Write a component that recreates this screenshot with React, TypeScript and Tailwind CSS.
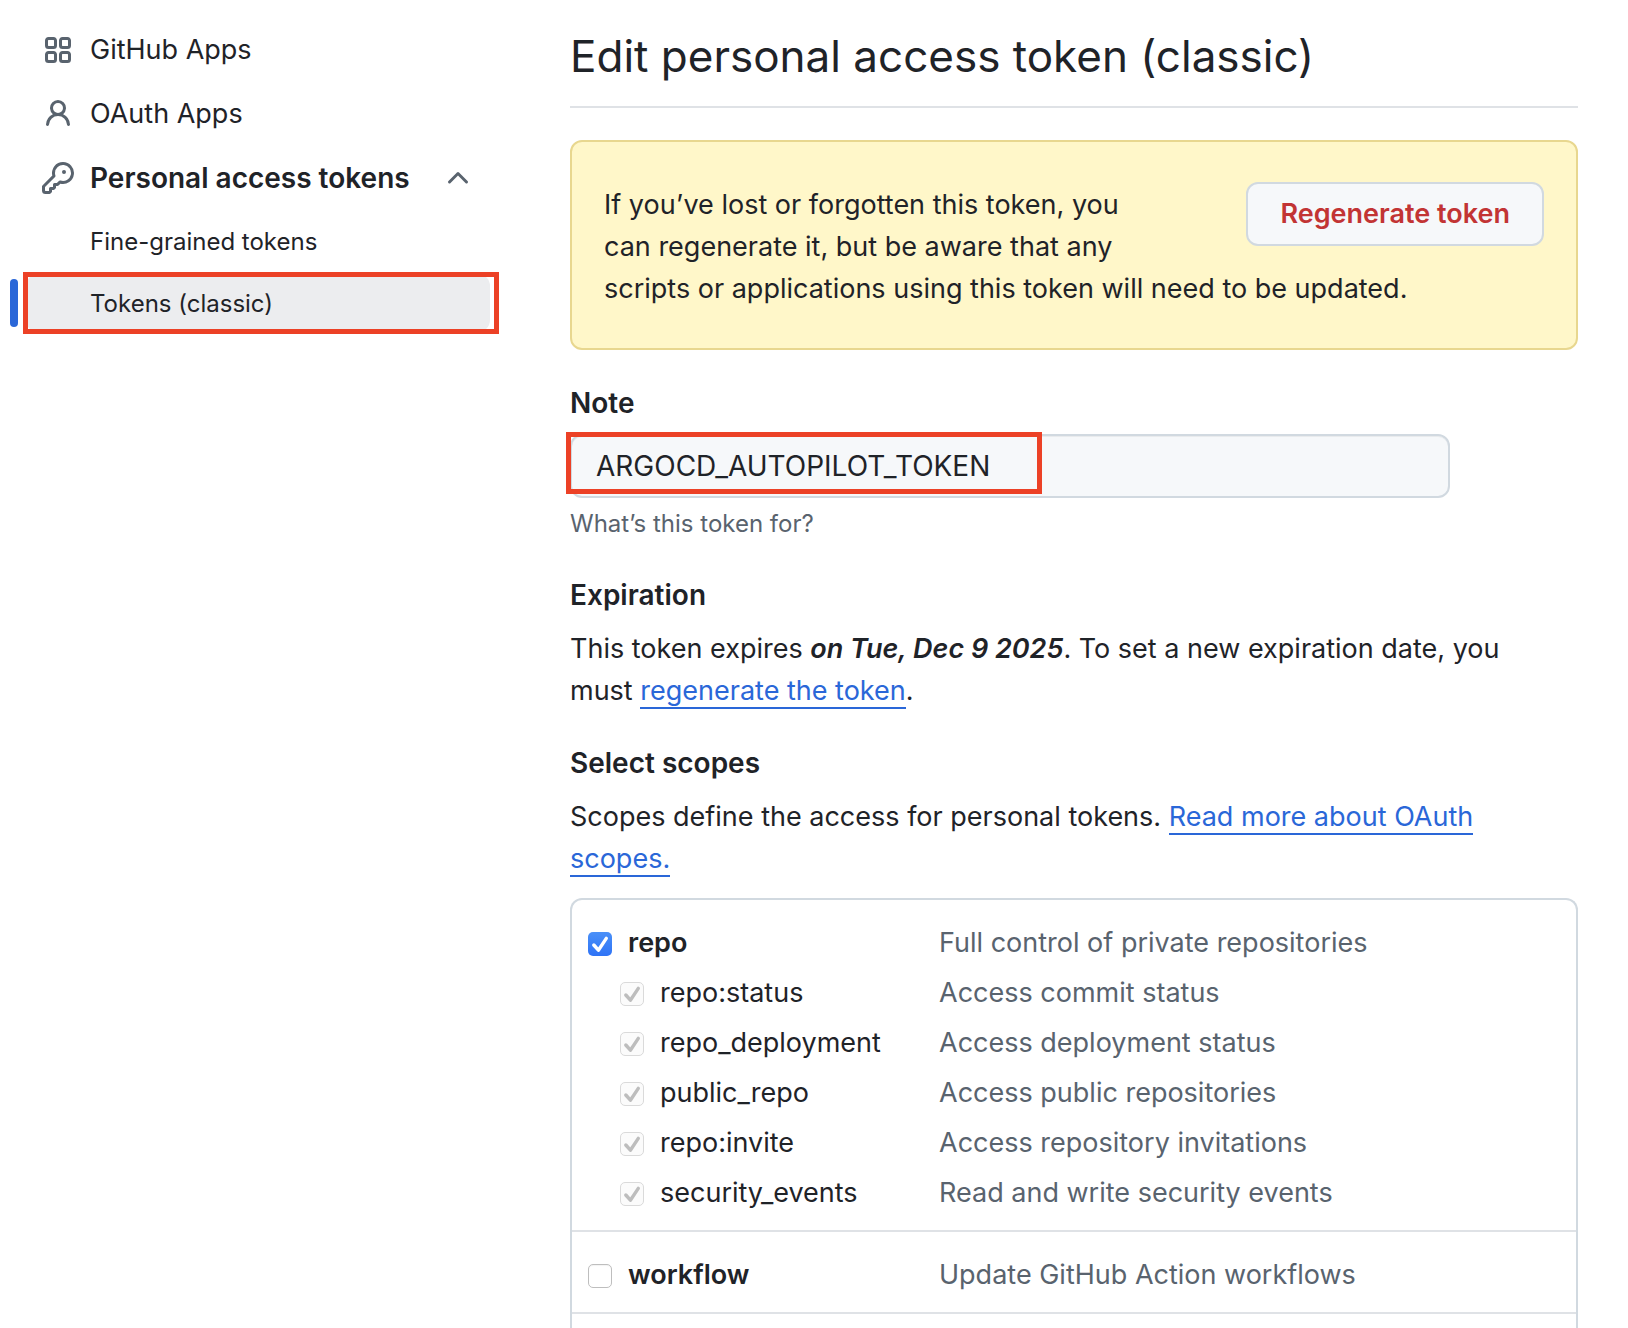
import React, { useState } from 'react';

interface Scope {
  name: string;
  description: string;
  children?: Scope[];
}

const scopes: Scope[] = [
  {
    name: 'repo',
    description: 'Full control of private repositories',
    children: [
      { name: 'repo:status', description: 'Access commit status' },
      { name: 'repo_deployment', description: 'Access deployment status' },
      { name: 'public_repo', description: 'Access public repositories' },
      { name: 'repo:invite', description: 'Access repository invitations' },
      { name: 'security_events', description: 'Read and write security events' },
    ],
  },
  { name: 'workflow', description: 'Update GitHub Action workflows' },
];

const icons = {
  apps: 'M1.5 3.25c0-.966.784-1.75 1.75-1.75h2.5c.966 0 1.75.784 1.75 1.75v2.5A1.75 1.75 0 0 1 5.75 7.5h-2.5A1.75 1.75 0 0 1 1.5 5.75Zm7 0c0-.966.784-1.75 1.75-1.75h2.5c.966 0 1.75.784 1.75 1.75v2.5a1.75 1.75 0 0 1-1.75 1.75h-2.5A1.75 1.75 0 0 1 8.5 5.75Zm-7 7c0-.966.784-1.75 1.75-1.75h2.5c.966 0 1.75.784 1.75 1.75v2.5a1.75 1.75 0 0 1-1.75 1.75h-2.5a1.75 1.75 0 0 1-1.75-1.75Zm7 0c0-.966.784-1.75 1.75-1.75h2.5c.966 0 1.75.784 1.75 1.75v2.5a1.75 1.75 0 0 1-1.75 1.75h-2.5a1.75 1.75 0 0 1-1.75-1.75ZM3.25 3a.25.25 0 0 0-.25.25v2.5c0 .138.112.25.25.25h2.5A.25.25 0 0 0 6 5.75v-2.5A.25.25 0 0 0 5.75 3Zm7 0a.25.25 0 0 0-.25.25v2.5c0 .138.112.25.25.25h2.5a.25.25 0 0 0 .25-.25v-2.5a.25.25 0 0 0-.25-.25Zm-7 7a.25.25 0 0 0-.25.25v2.5c0 .138.112.25.25.25h2.5a.25.25 0 0 0 .25-.25v-2.5a.25.25 0 0 0-.25-.25Zm7 0a.25.25 0 0 0-.25.25v2.5c0 .138.112.25.25.25h2.5a.25.25 0 0 0 .25-.25v-2.5a.25.25 0 0 0-.25-.25Z',
  person:
    'M10.561 8.073a6.005 6.005 0 0 1 3.432 5.142.75.75 0 1 1-1.498.07 4.5 4.5 0 0 0-8.99 0 .75.75 0 0 1-1.498-.07 6.004 6.004 0 0 1 3.431-5.142 3.999 3.999 0 1 1 5.123 0ZM10.5 5a2.5 2.5 0 1 0-5 0 2.5 2.5 0 0 0 5 0Z',
  key: 'M10.5 0a5.499 5.499 0 1 1-1.288 10.848l-.932.932a.749.749 0 0 1-.53.22H7v.75a.749.749 0 0 1-.22.53l-.5.5a.749.749 0 0 1-.53.22H5v.75a.749.749 0 0 1-.22.53l-.5.5a.749.749 0 0 1-.53.22h-2A1.75 1.75 0 0 1 0 14.25v-2c0-.199.079-.389.22-.53l4.932-4.932A5.5 5.5 0 0 1 10.5 0Zm-4 5.5c-.001.431.069.86.205 1.269a.75.75 0 0 1-.181.768L1.5 12.56v1.69c0 .138.112.25.25.25h1.69l.06-.06v-1.19a.75.75 0 0 1 .75-.75h1.19l.06-.06v-1.19a.75.75 0 0 1 .75-.75h1.19l1.023-1.025a.75.75 0 0 1 .768-.18A4 4 0 1 0 6.5 5.5ZM11 6a1 1 0 1 1 0-2 1 1 0 0 1 0 2Z',
  chevronUp:
    'M3.22 10.53a.749.749 0 0 1 0-1.06l4.25-4.25a.749.749 0 0 1 1.06 0l4.25 4.25a.749.749 0 1 1-1.06 1.06L8 6.811 4.28 10.53a.749.749 0 0 1-1.06 0Z',
};

const Icon: React.FC<{ path: string }> = ({ path }) => (
  <svg viewBox="0 0 16 16" fill="currentColor" aria-hidden="true" className="h-8 w-8 shrink-0 text-[#59636e]">
    <path d={path} />
  </svg>
);

interface CheckboxProps {
  id: string;
  checked: boolean;
  disabled?: boolean;
  onChange: () => void;
}

const Checkbox: React.FC<CheckboxProps> = ({ id, checked, disabled, onChange }) => (
  <span className="relative mt-px h-6 w-6 shrink-0">
    <input
      id={id}
      type="checkbox"
      checked={checked}
      disabled={disabled}
      onChange={onChange}
      className="block h-6 w-6 appearance-none rounded-[5px] border border-[#bebebe] bg-white inset-shadow-xs checked:border-0 checked:bg-linear-to-b checked:from-[#4a90f8] checked:to-[#2f73f6] checked:inset-shadow-none disabled:border disabled:border-[#dadada] disabled:bg-none disabled:bg-[#fbfbfb]"
    />
    {checked && (
      <svg
        viewBox="0 0 24 24"
        fill="none"
        stroke="currentColor"
        strokeWidth="3.4"
        strokeLinecap="round"
        strokeLinejoin="round"
        aria-hidden="true"
        className={`pointer-events-none absolute inset-0 ${disabled ? 'text-[#bdbdbd]' : 'text-white'}`}
      >
        <path d="M5.8 13l4.6 5.2L18.3 6.4" />
      </svg>
    )}
  </span>
);

interface ScopeRowProps {
  scope: Scope;
  nested?: boolean;
  checked: boolean;
  onChange: () => void;
}

const ScopeRow: React.FC<ScopeRowProps> = ({ scope, nested, checked, onChange }) => (
  <div className="flex h-[50px] items-center">
    <div className={`flex w-[351px] shrink-0 items-center gap-4 ${nested ? 'pl-8' : ''}`}>
      <Checkbox id={scope.name} checked={checked} disabled={nested} onChange={onChange} />
      <label htmlFor={scope.name} className={nested ? '' : 'font-semibold'}>
        {scope.name}
      </label>
    </div>
    <span className="text-[#59636e]">{scope.description}</span>
  </div>
);

const App: React.FC = () => {
  const [note, setNote] = useState('ARGOCD_AUTOPILOT_TOKEN');
  const [selected, setSelected] = useState<string[]>(['repo']);

  const toggle = (name: string) => {
    setSelected((prev) => (prev.includes(name) ? prev.filter((n) => n !== name) : [...prev, name]));
  };

  const linkClass = 'border-b-2 border-[#2a67d8] text-[#2a67d8]';
  const headingClass = 'text-[28px] leading-[42px] font-semibold';

  return (
    <div className="flex min-h-screen bg-white font-[Inter,sans-serif] text-[27px] leading-[42px] text-[#1f2328]">
      <nav aria-label="Developer settings" className="w-[499px] shrink-0 pt-[18px] pl-[10px]">
        <ul>
          <li>
            <a href="#github-apps" className="flex h-16 items-center gap-4 pl-8">
              <Icon path={icons.apps} />
              GitHub Apps
            </a>
          </li>
          <li>
            <a href="#oauth-apps" className="flex h-16 items-center gap-4 pl-8">
              <Icon path={icons.person} />
              OAuth Apps
            </a>
          </li>
          <li>
            <button
              type="button"
              aria-expanded="true"
              className="flex h-16 w-full items-center gap-4 pr-[25px] pl-8 text-[28px] font-semibold"
            >
              <Icon path={icons.key} />
              <span className="flex-1 text-left">Personal access tokens</span>
              <Icon path={icons.chevronUp} />
            </button>
            <ul className="text-2xl">
              <li>
                <a href="#fine-grained" className="flex h-[62px] items-center pt-[2px] pl-20">
                  Fine-grained tokens
                </a>
              </li>
              <li className="relative flex h-[62px] items-center">
                <span className="h-12 w-2 rounded-full bg-[#2a67d8]" />
                <a
                  href="#tokens-classic"
                  aria-current="page"
                  className="mr-[9px] ml-2 flex h-[58px] flex-1 items-center rounded-xl bg-[#ecedef] pt-[2px] pl-16"
                >
                  Tokens (classic)
                </a>
                <span className="pointer-events-none absolute inset-y-0 right-0 left-[13px] border-5 border-[#ec4126]" />
              </li>
            </ul>
          </li>
        </ul>
      </nav>

      <main className="flex min-w-0 flex-1 flex-col pr-[50px] pl-[71px]">
        <h1 className="border-b-2 border-[#dfe2e6] pt-5 pb-[14px] text-[44px] leading-[72px]">
          Edit personal access token (classic)
        </h1>

        <div className="mt-8 rounded-xl border-2 border-[#e8d78f] bg-[#fff7c9] px-8 pt-10 pb-[38px]">
          <button
            type="button"
            className="float-right ml-[76px] h-16 rounded-xl border-2 border-[#d1d9e0] bg-[#f6f8fa] px-8 font-semibold text-[#c23434]"
          >
            Regenerate token
          </button>
          <p className="pt-[2px]">
            If you’ve lost or forgotten this token, you can regenerate it, but be aware that any scripts or
            applications using this token will need to be updated.
          </p>
        </div>

        <label htmlFor="note" className={`mt-8 ${headingClass}`}>
          Note
        </label>
        <div className="relative mt-[10px] max-w-[880px]">
          <input
            id="note"
            type="text"
            value={note}
            onChange={(e) => setNote(e.target.value)}
            className="block h-16 w-full rounded-xl border-2 border-[#d1d9e0] bg-[#f6f8fa] px-6 text-[28px] inset-shadow-2xs"
          />
          <span className="pointer-events-none absolute -top-[2px] -left-1 h-[62px] w-[476px] border-5 border-[#ec4126]" />
        </div>
        <p className="mt-2 text-2xl leading-9 text-[#59636e]">What’s this token for?</p>

        <h2 className={`mt-8 ${headingClass}`}>Expiration</h2>
        <p className="mt-3 pr-8">
          This token expires <em className="font-semibold">on Tue, Dec 9 2025</em>. To set a new expiration date, you
          must{' '}
          <a href="#regenerate" className={linkClass}>
            regenerate the token
          </a>
          .
        </p>

        <h2 className={`mt-[30px] ${headingClass}`}>Select scopes</h2>
        <p className="mt-3 pr-8">
          Scopes define the access for personal tokens.{' '}
          <a href="#scopes" className={linkClass}>
            Read more about OAuth scopes.
          </a>
        </p>

        <ul className="mt-[18px] flex-1 rounded-t-xl border-2 border-b-0 border-[#d1d9e0]">
          {scopes.map((scope) => (
            <li key={scope.name} className="border-b-2 border-[#dfe2e6] px-4 pt-[18px] pb-3">
              <ScopeRow scope={scope} checked={selected.includes(scope.name)} onChange={() => toggle(scope.name)} />
              {scope.children?.map((child) => (
                <ScopeRow
                  key={child.name}
                  scope={child}
                  nested
                  checked={selected.includes(scope.name)}
                  onChange={() => toggle(child.name)}
                />
              ))}
            </li>
          ))}
        </ul>
      </main>
    </div>
  );
};

export default App;
